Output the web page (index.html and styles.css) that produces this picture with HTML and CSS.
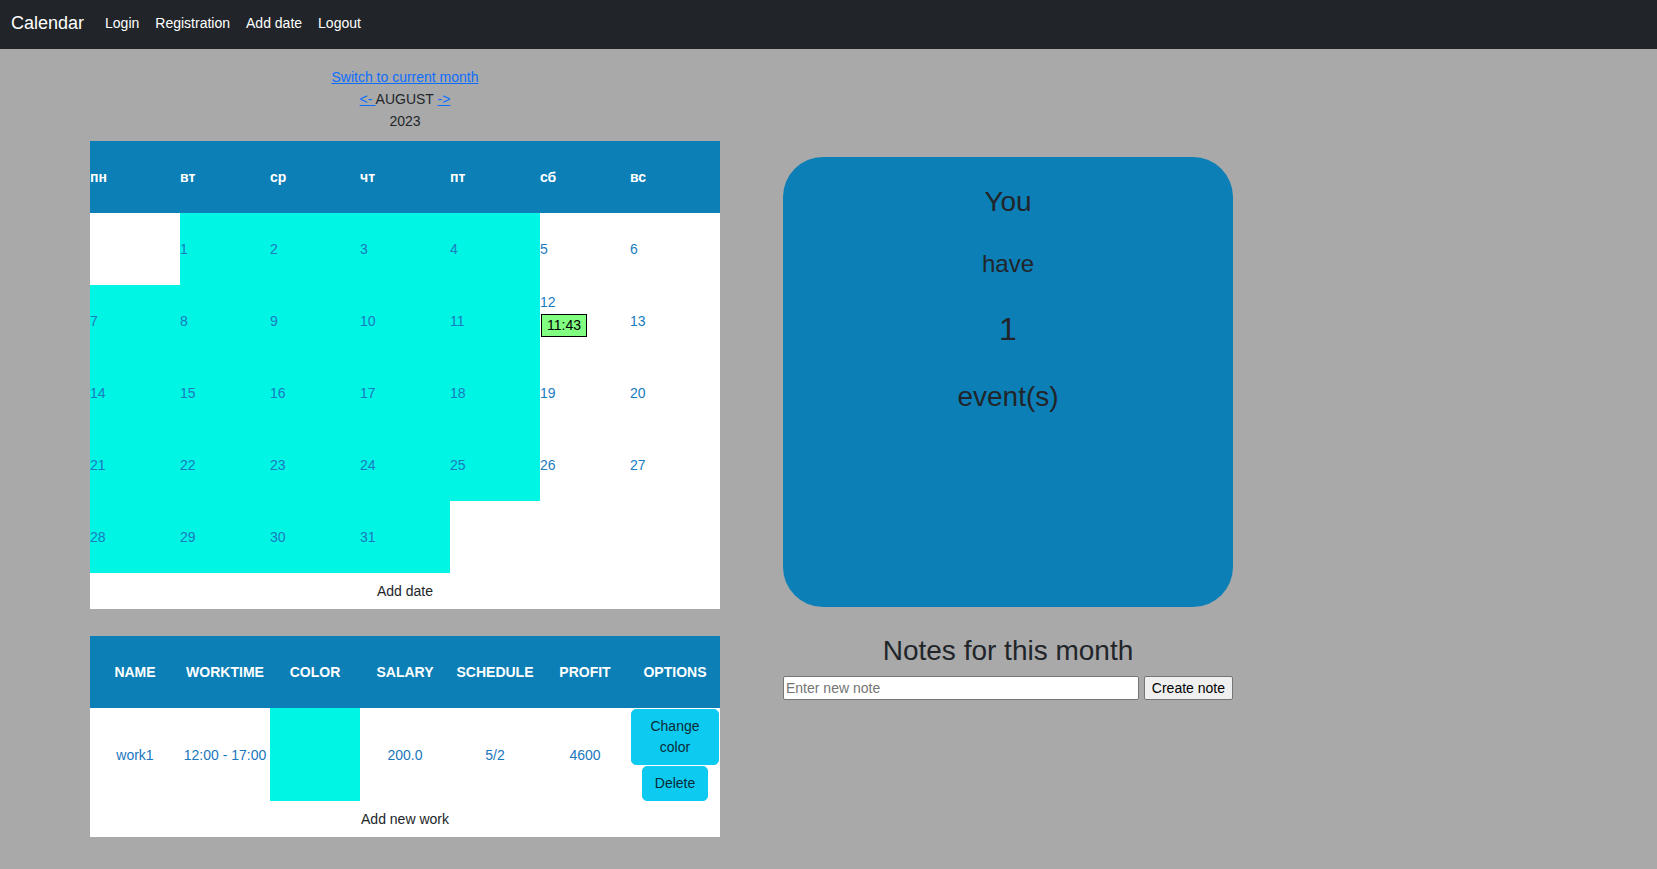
FILE: index.html
```html
<!DOCTYPE html>
<html lang="en">
<head>
<meta charset="utf-8">
<title>Calendar</title>
<link rel="stylesheet" href="styles.css">
</head>
<body>
<nav class="navbar">
  <span class="brand">Calendar</span>
  <a class="nav-link" href="#">Login</a>
  <a class="nav-link" href="#">Registration</a>
  <a class="nav-link" href="#">Add date</a>
  <a class="nav-link" href="#">Logout</a>
</nav>
<div class="main">
  <div class="left">
    <div class="month-nav">
      <div><a href="#">Switch to current month</a></div>
      <div><a href="#">&lt;- </a>AUGUST <a href="#">-&gt;</a></div>
      <div>2023</div>
    </div>
    <table class="calendar">
      <thead>
        <tr><th>пн</th><th>вт</th><th>ср</th><th>чт</th><th>пт</th><th>сб</th><th>вс</th></tr>
      </thead>
      <tbody>
        <tr><td class="day"></td><td class="day work">1</td><td class="day work">2</td><td class="day work">3</td><td class="day work">4</td><td class="day">5</td><td class="day">6</td></tr>
        <tr><td class="day work">7</td><td class="day work">8</td><td class="day work">9</td><td class="day work">10</td><td class="day work">11</td><td class="day"><div class="day-events"><div class="day-num">12</div><span class="event">11:43</span></div></td><td class="day">13</td></tr>
        <tr><td class="day work">14</td><td class="day work">15</td><td class="day work">16</td><td class="day work">17</td><td class="day work">18</td><td class="day">19</td><td class="day">20</td></tr>
        <tr><td class="day work">21</td><td class="day work">22</td><td class="day work">23</td><td class="day work">24</td><td class="day work">25</td><td class="day">26</td><td class="day">27</td></tr>
        <tr><td class="day work">28</td><td class="day work">29</td><td class="day work">30</td><td class="day work">31</td><td class="day"></td><td class="day"></td><td class="day"></td></tr>
        <tr class="add-row"><td colspan="7">Add date</td></tr>
      </tbody>
    </table>
    <table class="works">
      <thead>
        <tr><th>Name</th><th>Worktime</th><th>Color</th><th>Salary</th><th>Schedule</th><th>Profit</th><th>Options</th></tr>
      </thead>
      <tbody>
        <tr class="work-row">
          <td>work1</td>
          <td>12:00 - 17:00</td>
          <td class="swatch"></td>
          <td>200.0</td>
          <td>5/2</td>
          <td>4600</td>
          <td class="options">
            <button class="btn">Change color</button>
            <button class="btn btn-delete">Delete</button>
          </td>
        </tr>
        <tr class="add-row"><td colspan="7">Add new work</td></tr>
      </tbody>
    </table>
  </div>
  <div class="right">
    <div class="summary">
      <h3 class="sum-you">You</h3>
      <h4 class="sum-have">have</h4>
      <h2 class="sum-count">1</h2>
      <h3 class="sum-events">event(s)</h3>
    </div>
    <h3 class="notes-title">Notes for this month</h3>
    <form class="note-form">
      <input class="note-input" type="text" placeholder="Enter new note">
      <button class="note-btn" type="button">Create note</button>
    </form>
  </div>
</div>
</body>
</html>
```

FILE: styles.css
```css
body {
  margin: 0;
  background: #a9a9a9;
  font-family: "Liberation Sans", Arial, sans-serif;
  font-size: 14px;
  line-height: 1.5;
  color: #212529;
}

.navbar {
  display: flex;
  align-items: center;
  box-sizing: border-box;
  height: 49px;
  padding: 0 10px 2px 11px;
  background: #212529;
}

.brand {
  font-size: 18px;
  line-height: 27px;
  color: #fff;
  margin-right: 13px;
}

.nav-link {
  color: #fff;
  padding: 0 8px;
  text-decoration: none;
  line-height: 21px;
}

.main {
  display: flex;
  align-items: flex-start;
  padding-left: 90px;
  gap: 63px;
}

.left {
  width: 630px;
  padding-top: 17px;
}

.month-nav {
  text-align: center;
  line-height: 22px;
}

.month-nav a {
  color: #0d6efd;
}

table {
  width: 630px;
  border-collapse: collapse;
  table-layout: fixed;
  background: #fff;
}

.calendar {
  margin-top: 9px;
}

.calendar th,
.calendar td {
  width: 90px;
  height: 72px;
  padding: 0;
  text-align: left;
  vertical-align: middle;
}

.calendar th,
.works th {
  background: #0b7fb6;
  color: #fff;
  font-weight: bold;
}

.day {
  color: #1a7bbf;
}

.day.work {
  background: #00f5e4;
}

.day-events {
  padding-bottom: 14px;
}

.day-num {
  line-height: 21px;
}

.event {
  display: inline-block;
  margin: 1px 0 0 1px;
  padding: 0 5px;
  line-height: 21px;
  border: 1px solid #000;
  background: #80ff80;
  color: #000;
}

.calendar .add-row td {
  height: 36px;
  text-align: center;
  color: #212529;
}

.works {
  margin-top: 27px;
}

.works th {
  height: 72px;
  padding: 0;
  text-align: center;
  text-transform: uppercase;
}

.works td {
  padding: 1px 1px 0;
  text-align: center;
  vertical-align: middle;
  color: #1a76bd;
}

.works .swatch {
  background: #00f5e4;
}

.btn {
  display: block;
  margin: 0 auto;
  padding: 6px 12px;
  font-family: "Liberation Sans", Arial, sans-serif;
  font-size: 14px;
  line-height: 21px;
  color: #0a2a36;
  background: #0dcaf0;
  border: 1px solid #0dcaf0;
  border-radius: 5px;
}

.btn-delete {
  margin-top: 1px;
}

.works .add-row td {
  height: 36px;
  padding: 0;
  color: #212529;
}

.right {
  width: 450px;
  padding-top: 108px;
}

.summary {
  box-sizing: border-box;
  height: 450px;
  padding-top: 28px;
  background: #0b7fb6;
  border-radius: 40px;
  text-align: center;
}

.summary h2,
.summary h3,
.summary h4,
.notes-title {
  margin: 0;
  font-weight: normal;
  line-height: 1.2;
}

.sum-you,
.sum-events {
  font-size: 28px;
}

.sum-you {
  margin-bottom: 31px !important;
}

.sum-have {
  font-size: 24px;
  margin-bottom: 32px !important;
}

.sum-count {
  font-size: 32px;
  margin-bottom: 31px !important;
}

.notes-title {
  margin: 27px 0 8px !important;
  font-size: 28px;
  text-align: center;
}

.note-form {
  display: flex;
  gap: 5px;
  height: 24px;
  margin: 0;
}

.note-input {
  flex: 1;
  box-sizing: border-box;
  height: 24px;
  padding: 1px 2px;
  font-family: "Liberation Sans", Arial, sans-serif;
  font-size: 14px;
  border: 1px solid #767676;
  border-radius: 2px;
  background: #fff;
}

.note-input::placeholder {
  color: #757575;
}

.note-btn {
  box-sizing: border-box;
  height: 24px;
  padding: 1px 7px;
  font-family: "Liberation Sans", Arial, sans-serif;
  font-size: 14px;
  color: #000;
  background: #efefef;
  border: 1px solid #767676;
  border-radius: 2px;
}
```
